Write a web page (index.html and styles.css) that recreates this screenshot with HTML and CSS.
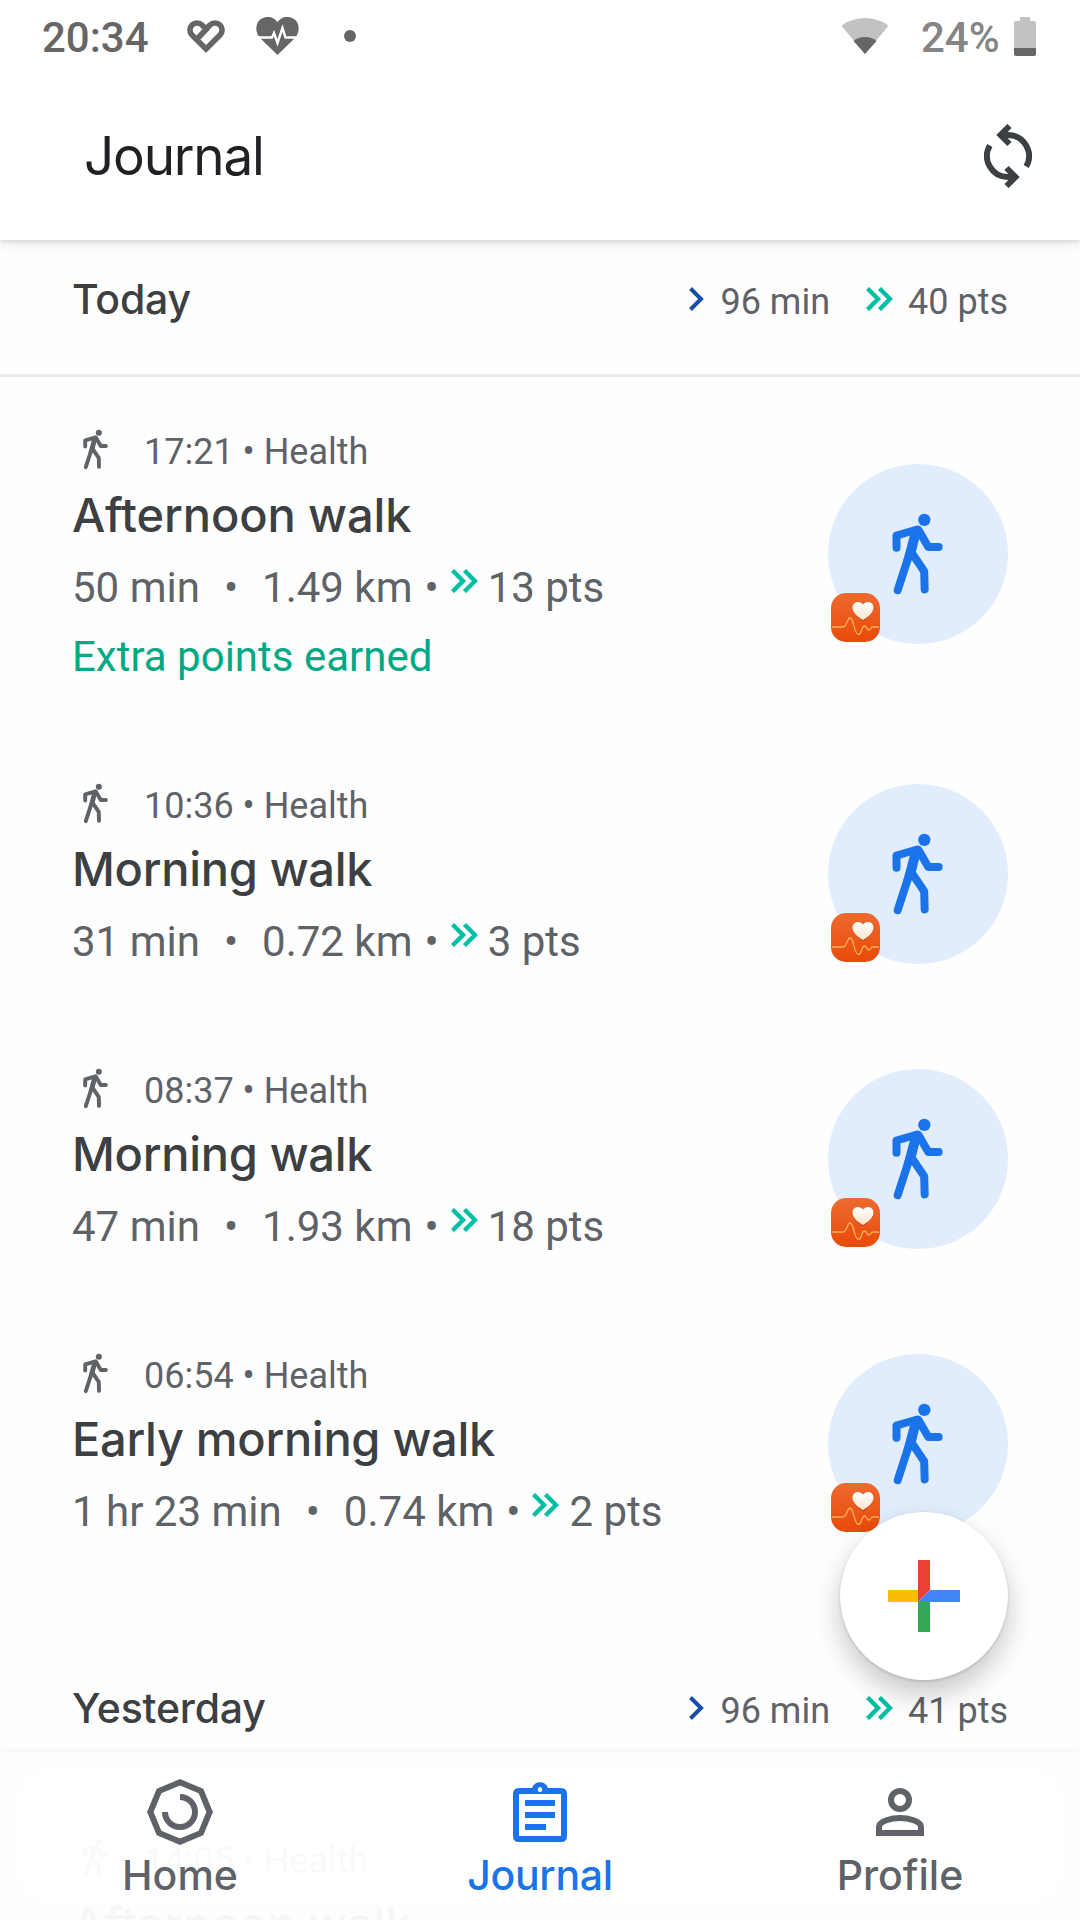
FILE: index.html
```html
<!DOCTYPE html>
<html lang="en">
<head>
<meta charset="UTF-8">
<meta name="viewport" content="width=device-width, initial-scale=1.0">
<title>Journal</title>
<link rel="stylesheet" href="styles.css">
</head>
<body>
<!-- shared icons -->
<svg class="defs" width="0" height="0">
    <defs>
        <linearGradient id="orange" x1="0" y1="0" x2="0" y2="1">
            <stop offset="0" stop-color="#ee6a30"/>
            <stop offset="1" stop-color="#e84a08"/>
        </linearGradient>
        <linearGradient id="cream" x1="0" y1="0" x2="0" y2="1">
            <stop offset="0" stop-color="#ffffff"/>
            <stop offset="1" stop-color="#fde3cc"/>
        </linearGradient>
    </defs>
    <symbol id="walk" viewBox="278 220 153 245">
        <circle cx="375" cy="240" r="18.5" fill="currentColor"/>
        <path d="M331 289L342 262L356 258L369 268L359 298L350 335L337 362L312 362Z" fill="currentColor"/>
        <path d="M291.500 324V287L354 269L295 451M357 270L387 321.500H418M338 340L374.500 394L376 449" fill="none" stroke="currentColor" stroke-width="24" stroke-linecap="round" stroke-linejoin="round"/>
    </symbol>
    <symbol id="single" viewBox="0 0 15 24">
        <path d="M1.500 1.500L12 12L1.500 22.500" fill="none" stroke="#174ea6" stroke-width="4"/>
    </symbol>
    <symbol id="double" viewBox="0 0 27 24">
        <path d="M1.500 1.500L12 12L1.500 22.500M13.500 1.500L24 12L13.500 22.500" fill="none" stroke="#00bfa5" stroke-width="4.400"/>
    </symbol>
    <symbol id="health" viewBox="0 0 49 49">
        <rect width="49" height="49" rx="15" fill="url(#orange)"/>
        <path d="M32 28.500C27 25 22 21 22 15.500C22 9 29 7.500 32 12C35 7.500 42.500 9 42.500 15.500C42.500 21 37 25 32 28.500Z" fill="#a83b0c" opacity=".5"/>
        <path d="M32 27C27 24 21.500 20 21.500 14.500C21.500 8.500 29 7 32 11.500C35 7 42.500 8.500 42.500 14.500C42.500 20 37 24 32 27Z" fill="url(#cream)"/>
        <path d="M1 34H12C16 34 16 25 19 25C23 25 23 41.500 27.500 41.500C31 41.500 30 33 33.500 33C36 33 35 37 38 37C40 37 39 34 42 34H48" fill="none" stroke="#ffb057" stroke-width="1.300"/>
    </symbol>
</svg>

<div class="screen">
    <header class="topbar">
        <div class="status">
            <span class="clock">20:34</span>
            <svg class="fit" viewBox="0 0 38 33">
                <path d="M19 29L5 15A7.070 7.070 0 0 1 15 5L19 9L23 5A7.070 7.070 0 0 1 33 15ZM21 7.500L10.500 18.500" fill="none" stroke="#666" stroke-width="5.600"/>
            </svg>
            <svg class="pulse" viewBox="0 0 43 38">
                <path d="M21.500 38L4 21C-2 14 0 5 5 2C11 -2 18 0 21.500 5C25 0 32 -2 38 2C43 5 45 14 39 21Z" fill="#666"/>
                <path d="M1 20.500H16L18 16L21.500 26L26.500 11L29.500 20.500H42" fill="none" stroke="#fff" stroke-width="2.400"/>
            </svg>
            <span class="dot"></span>
            <svg class="wifi" viewBox="0 0 46 36">
                <path d="M23 36L0.500 9Q-.5 7.500 1 6.500Q11 0 23 0T45 6.500Q46.500 7.500 45.500 9Z" fill="#c2c2c2"/>
                <path d="M23 36L11.500 23Q16 19 23 19T34.500 23Z" fill="#666"/>
            </svg>
            <span class="percent">24%</span>
            <svg class="battery" viewBox="0 0 22 39">
                <path d="M6 0H16V4H20Q22 4 22 6V31H0V6Q0 4 2 4H6Z" fill="#c2c2c2"/>
                <path d="M0 31H22V37Q22 39 20 39H2Q0 39 0 37Z" fill="#666"/>
            </svg>
        </div>
        <div class="titlebar">
            <h1>Journal</h1>
            <svg class="sync" viewBox="0 0 48 64">
                <g fill="none" stroke="#3c4043" stroke-width="6">
                    <path d="M25.500 2L16.500 11L25.500 20M18 11H24A21 21 0 0 1 42.200 42.500"/>
                    <path d="M22.500 62L31.500 53L22.500 44M30 53H24A21 21 0 0 1 5.800 21.500"/>
                </g>
            </svg>
        </div>
    </header>

    <main>
        <section class="day">
            <div class="day-head">
                <h2>Today</h2>
                <div class="totals">
                    <svg class="single"><use href="#single"/></svg><span>96 min</span>
                    <svg class="double"><use href="#double"/></svg><span>40 pts</span>
                </div>
            </div>
            <article class="entry">
                <div class="info">
                    <div class="meta"><svg class="walk-small"><use href="#walk"/></svg>17:21 • Health</div>
                    <h3 class="afternoon">Afternoon walk</h3>
                    <div class="stats">50 min<span class="sep">•</span>1.49 km<span class="bullet">•</span><svg class="double"><use href="#double"/></svg>13 pts</div>
                    <div class="extra">Extra points earned</div>
                </div>
                <div class="circle">
                    <svg class="walk-big"><use href="#walk"/></svg>
                    <svg class="badge"><use href="#health"/></svg>
                </div>
            </article>
            <article class="entry">
                <div class="info">
                    <div class="meta"><svg class="walk-small"><use href="#walk"/></svg>10:36 • Health</div>
                    <h3>Morning walk</h3>
                    <div class="stats">31 min<span class="sep">•</span>0.72 km<span class="bullet">•</span><svg class="double"><use href="#double"/></svg>3 pts</div>
                </div>
                <div class="circle">
                    <svg class="walk-big"><use href="#walk"/></svg>
                    <svg class="badge"><use href="#health"/></svg>
                </div>
            </article>
            <article class="entry">
                <div class="info">
                    <div class="meta"><svg class="walk-small"><use href="#walk"/></svg>08:37 • Health</div>
                    <h3>Morning walk</h3>
                    <div class="stats">47 min<span class="sep">•</span>1.93 km<span class="bullet">•</span><svg class="double"><use href="#double"/></svg>18 pts</div>
                </div>
                <div class="circle">
                    <svg class="walk-big"><use href="#walk"/></svg>
                    <svg class="badge"><use href="#health"/></svg>
                </div>
            </article>
            <article class="entry">
                <div class="info">
                    <div class="meta"><svg class="walk-small"><use href="#walk"/></svg>06:54 • Health</div>
                    <h3>Early morning walk</h3>
                    <div class="stats">1 hr 23 min<span class="sep">•</span>0.74 km<span class="bullet">•</span><svg class="double"><use href="#double"/></svg>2 pts</div>
                </div>
                <div class="circle">
                    <svg class="walk-big"><use href="#walk"/></svg>
                    <svg class="badge"><use href="#health"/></svg>
                </div>
            </article>
        </section>

        <section class="day">
            <div class="day-head">
                <h2>Yesterday</h2>
                <div class="totals">
                    <svg class="single"><use href="#single"/></svg><span>96 min</span>
                    <svg class="double"><use href="#double"/></svg><span>41 pts</span>
                </div>
            </div>
            <article class="entry">
                <div class="info">
                    <div class="meta"><svg class="walk-small"><use href="#walk"/></svg>14:05 • Health</div>
                    <h3 class="afternoon">Afternoon walk</h3>
                </div>
            </article>
        </section>
    </main>

    <button class="fab" aria-label="Add">
        <svg viewBox="0 0 72 72">
            <path d="M30 0H42V30L30 42Z" fill="#ea4335"/>
            <path d="M0 30H30V42H0Z" fill="#fbbc04"/>
            <path d="M30 42H42V72H30Z" fill="#34a853"/>
            <path d="M42 30H72V42H30Z" fill="#4285f4"/>
        </svg>
    </button>

    <nav class="tabs">
        <a>
            <svg viewBox="0 0 72 72">
                <path d="M36 6.300L57 15L65.700 36L57 57L36 65.700L15 57L6.300 36L15 15Z" fill="none" stroke="currentColor" stroke-width="6"/>
                <path d="M36 21A15 15 0 1 1 21 36" fill="none" stroke="currentColor" stroke-width="6"/>
            </svg>
            Home
        </a>
        <a class="active">
            <svg viewBox="0 0 72 72">
                <path d="M15 12H28A8.500 8.500 0 0 1 44 12H57Q63 12 63 18V60Q63 66 57 66H15Q9 66 9 60V18Q9 12 15 12ZM15 18V60H57V18ZM36 11A2.300 2.500 0 1 0 36 16A2.300 2.500 0 1 0 36 11" fill="currentColor" fill-rule="evenodd"/>
                <path d="M21 24H51V30H21ZM21 36H51V42H21ZM21 48H42V54H21Z" fill="currentColor"/>
            </svg>
            Journal
        </a>
        <a>
            <svg viewBox="0 0 72 72">
                <circle cx="36" cy="24" r="9" fill="none" stroke="currentColor" stroke-width="6"/>
                <path d="M15 57V51C15 45 28 42 36 42S57 45 57 51V57Z" fill="none" stroke="currentColor" stroke-width="6"/>
            </svg>
            Profile
        </a>
    </nav>
</div>
</body>
</html>
```
FILE: styles.css
```css
* {
    box-sizing: border-box;
}
body {
    margin: 0;
    background: #fefefe;
    font-family: Roboto, "Liberation Sans", sans-serif;
    color: #5f6368;
}
h1, h2, h3 {
    margin: 0;
    font-family: Inter, "Liberation Sans", sans-serif;
}
svg {
    display: block;
    flex: none;
}
.defs {
    position: absolute;
}
.screen {
    position: relative;
    width: 1080px;
    height: 1920px;
    overflow: hidden;
}

/* status bar + title */
.topbar {
    position: relative;
    height: 240px;
    background: #fff;
    box-shadow: 0 2px 4px rgba(0, 0, 0, 0.1), 0 2px 14px rgba(0, 0, 0, 0.1);
}
.status {
    display: flex;
    align-items: center;
    height: 72px;
    padding: 0 44px 0 42px;
    font-size: 42px;
    font-weight: 500;
    color: #666;
}
.clock {
    width: 145px;
    padding-top: 3px;
}
.fit {
    width: 38px;
    height: 33px;
}
.pulse {
    width: 43px;
    height: 38px;
    margin-left: 31px;
}
.dot {
    width: 12px;
    height: 12px;
    margin-left: 45px;
    border-radius: 50%;
    background: #666;
}
.wifi {
    width: 46px;
    height: 36px;
    margin-left: auto;
}
.percent {
    width: 92px;
    margin-left: 33px;
    padding-top: 3px;
    color: #858585;
}
.battery {
    width: 22px;
    height: 39px;
    margin-left: 1px;
}
.titlebar {
    display: flex;
    align-items: center;
    justify-content: space-between;
    height: 168px;
    padding: 0 48px 0 84px;
}
h1 {
    font-size: 53px;
    font-weight: 400;
    line-height: 64px;
    letter-spacing: -1.2px;
    color: #202124;
}
.sync {
    width: 48px;
    height: 64px;
}

/* day summary */
.day-head {
    display: flex;
    align-items: center;
    justify-content: space-between;
    height: 137px;
    padding: 0 72px 18px;
    border-bottom: 3px solid #e8eaed;
}
.day + .day {
    margin-top: 63px;
}
h2 {
    font-size: 41px;
    font-weight: 500;
    line-height: 50px;
    letter-spacing: -0.2px;
    color: #3c4043;
    padding-top: 2px;
}
.totals {
    display: flex;
    align-items: center;
    font-size: 36px;
    line-height: 42px;
    padding-top: 8px;
}
.totals svg {
    position: relative;
    top: -3px;
}
.single {
    width: 15px;
    height: 24px;
    margin-right: 16px;
}
.double {
    width: 27px;
    height: 24px;
}
.totals .double {
    margin-left: 36px;
    margin-right: 15px;
}

/* activity rows */
.entry {
    display: flex;
    align-items: center;
    justify-content: space-between;
    padding-right: 72px;
    padding-left: 72px;
}
.info {
    padding: 45px 0 34px;
}
.meta {
    display: flex;
    align-items: center;
    font-size: 36px;
    line-height: 60px;
}
.walk-small {
    width: 25px;
    height: 41px;
    margin: 0 36px 6px 11px;
}
h3 {
    font-size: 47px;
    font-weight: 500;
    line-height: 66px;
    letter-spacing: -0.3px;
    color: #3c4043;
}
.afternoon {
    letter-spacing: -0.1px;
}
.stats {
    display: flex;
    align-items: center;
    font-size: 42px;
    line-height: 80px;
}
.sep {
    margin: 0 24px;
}
.bullet {
    margin-left: 12px;
}
.stats .double {
    margin: 0 10px 15px 12px;
}
.extra {
    padding-bottom: 11px;
    font-size: 42px;
    line-height: 58px;
    color: #00a884;
}
.circle {
    position: relative;
    display: flex;
    align-items: center;
    justify-content: center;
    width: 180px;
    height: 180px;
    padding-right: 1px;
    border-radius: 50%;
    background: #e1edfc;
    color: #1a73e8;
}
.walk-big {
    width: 51px;
    height: 82px;
}
.badge {
    position: absolute;
    left: 3px;
    top: 129px;
    width: 49px;
    height: 49px;
}

/* add button */
.fab {
    position: absolute;
    right: 72px;
    bottom: 240px;
    display: flex;
    align-items: center;
    justify-content: center;
    width: 168px;
    height: 168px;
    padding: 0;
    border: 0;
    border-radius: 50%;
    background: #fff;
    box-shadow: 0 1px 3px rgba(0, 0, 0, 0.16), 0 14px 28px rgba(0, 0, 0, 0.22);
}
.fab svg {
    width: 72px;
    height: 72px;
}

/* bottom tabs */
.tabs {
    position: absolute;
    left: 0;
    right: 0;
    bottom: 0;
    display: flex;
    height: 168px;
    background: rgba(255, 255, 255, 0.96);
    box-shadow: 0 -1px 6px rgba(0, 0, 0, 0.06), inset 0 0 50px rgba(0, 0, 0, 0.015);
}
.tabs a {
    display: flex;
    flex: 1;
    flex-direction: column;
    align-items: center;
    padding-top: 24px;
    font-family: Inter, "Liberation Sans", sans-serif;
    font-size: 41px;
    font-weight: 500;
    line-height: 54px;
    letter-spacing: 0;
}
.tabs svg {
    width: 72px;
    height: 72px;
}
.tabs .active {
    color: #1a73e8;
    letter-spacing: -0.3px;
}
```
